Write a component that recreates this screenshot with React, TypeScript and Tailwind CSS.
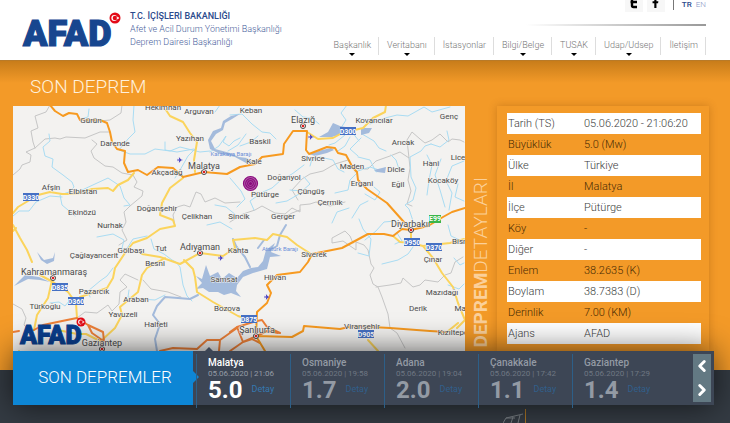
import { FaFacebookF } from "react-icons/fa";
import { LuChevronLeft, LuChevronRight } from "react-icons/lu";

const menu = [
  { name: "Başkanlık", sub: true },
  { name: "Veritabanı", sub: true },
  { name: "İstasyonlar", sub: false },
  { name: "Bilgi/Belge", sub: true },
  { name: "TUSAK", sub: true },
  { name: "Udap/Udsep", sub: true },
  { name: "İletişim", sub: false },
];

const details = [
  ["Tarih (TS)", "05.06.2020 - 21:06:20"],
  ["Büyüklük", "5.0 (Mw)"],
  ["Ülke", "Türkiye"],
  ["İl", "Malatya"],
  ["İlçe", "Pütürge"],
  ["Köy", "-"],
  ["Diğer", "-"],
  ["Enlem", "38.2635 (K)"],
  ["Boylam", "38.7383 (D)"],
  ["Derinlik", "7.00 (KM)"],
  ["Ajans", "AFAD"],
];

const quakes = [
  { place: "Malatya", date: "05.06.2020 | 21:06", size: "5.0" },
  { place: "Osmaniye", date: "05.06.2020 | 19:58", size: "1.7" },
  { place: "Adana", date: "05.06.2020 | 19:04", size: "2.0" },
  { place: "Çanakkale", date: "05.06.2020 | 17:42", size: "1.1" },
  { place: "Gaziantep", date: "05.06.2020 | 17:29", size: "1.4" },
];

const borders = [
  "M50 105 46 112 35 116 38 128 31 131 33 142 35 148M13 175 20 169 22 165 30 162 31 155 26 152 35 148 45 139 55 138 60 139 66 137 85 138 100 132 110 132M92 140 97 144 91 151 94 158 105 166 113 167 122 173 133 175 137 182 134 187 143 191 142 196 130 206 124 212 126 222 122 230 127 240 119 245",
  "M122 105 121 113 110 120 90 122 80 120M175 226 173 215 177 207 184 205 190 207 196 192 201 194 205 202 215 198 225 203 240 202",
  "M230 222 243 214 255 210 262 206 275 213 285 214 292 208 300 212 300 205 310 204 316 202 330 206 345 202M280 220 292 213 300 210M298 200 292 190 302 179 310 174 323 171 335 164 348 160 352 166M358 169 368 169 376 161 390 156 400 152 409 158 407 140 412 132 420 139 425 143 432 140 440 134 448 142 452 139 460 140 464 142",
  "M409 158 410 168 408 180 411 191 407 204 412 206M353 243 350 236 345 231 332 238 332 243 343 241 356 250 356 242 364 245 368 250 371 264 374 268 370 275 373 284 378 287 382 297 388 314 390 328 397 333 405 348M376 287 390 285 401 283 403 278 413 287 420 285 425 280 438 282 445 275 451 273 455 262 463 257",
  "M77 318 85 312 97 313 108 305 112 311 119 304 120 292 127 287 120 280 125 274 138 280M143 280 151 289 168 292 181 297M13 304 22 309 26 318 24 325 30 331",
];

const rivers = [
  "M49 134 50 141 43 147 45 156 53 159 52 167 63 175 72 182 74 187 69 192 60 195 62 205 68 210 75 216M134 105 133 120 135 132 128 139 119 150 130 154 145 154 155 149 170 151 180 147 200 152 210 151M13 216 19 211 29 211 36 202 50 196 62 197M80 191 95 184 108 178 120 186 124 198 130 205 124 206M81 119 88 117 89 109",
  "M195 149 188 156 180 170 175 178M165 142 165 150 177 152 194 149M210 152 219 146 226 136 223 142 229 146 234 141 240 138M228 151 238 145 246 134M215 205 226 207 236 215M207 225 220 222 232 229M220 105 215 112",
  "M230 115 242 114 252 124 262 132 270 133 276 139M230 178 241 191 245 199 237 207M254 210 250 201 263 192 272 188 281 180 292 174 304 165M240 146 251 142 258 136M276 203 287 201 299 194M290 190 302 191 310 184 304 177",
  "M295 110 303 117 312 118 319 124M347 105 341 113 346 120 341 128 352 132 359 141M370 124 385 118 397 115 408 116 424 107 432 112 450 107M362 134 374 141 379 148 386 151M345 135 335 143 329 145M350 137 345 146 338 151M361 138 350 149 358 156M310 166 312 159 320 157 333 160 338 169 344 172M355 172 370 167 382 171",
  "M399 169 396 160 391 155M358 157 370 160 376 172 385 168M357 173 350 180 348 190 335 193M365 194 375 200 380 192 374 187M411 234 413 221 409 209 405 205 413 200 416 188 411 177 410 157 421 151 425 146 431 144M431 144 440 147 449 140 447 131M464 161 452 166 446 181 452 193 449 210M441 159 435 175 440 190 445 207M427 155 432 165 429 180 427 195M332 223 337 212 349 208M352 218 360 205 368 201M464 201 455 197 458 184",
  "M358 253 369 256 371 239 363 229 359 219M365 240 376 231 384 222 395 221M382 264 398 260 408 254 413 247M395 244 402 241 397 233M448 285 459 289 464 284M454 258 460 265 464 263M448 225 451 236 464 242",
  "M97 237 113 234 124 240 122 248 126 250 133 239 147 236M151 239 154 249 164 254 172 260 176 262 180 267 183 285 187 296 192 301M113 268 107 276 100 281 88 291 90 297M50 303 59 302 65 306 70 300M129 290 128 297 140 299 155 300 165 295",
];

// wider, greyer streams that feed the dams
const streams = [
  "M157 351 155 339 160 324 153 315 157 306 165 297 178 298 190 299 198 295",
  "M233 239 236 246 245 257 250 267M286 225 280 235 277 246 270 250M264 240 258 248",
];

const yellowRoads = [
  "M166 110 170 116 183 122 190 133 197 142 194 160 195 172M183 178 170 188 162 203 160 215 173 220 175 226 160 229 147 238 133 243 125 253 115 268 113 278 107 288 80 297",
  "M134 173 128 180 118 185 113 191 108 188 92 189 80 193 70 194 62 194 50 192 38 195 28 201 18 207 13 213M13 225 20 238 27 250 32 262M40 275 53 282 68 292 76 303 77 318M52 280 48 298 37 315 34 330M13 360 19 351",
  "M142 254 160 257 180 264 200 253 223 256 235 248 233 240 255 238 267 240 273 234 287 237 297 245 311 254M165 258 147 268 142 275 138 292 120 307 122 315 115 328 102 340",
  "M184 260 193 269 195 277 197 292 213 302 238 316 247 319",
  "M307 132 318 139 333 138 342 133 363 128 373 118 385 112 386 105M393 236 400 242 411 243 423 246 433 258 442 273 453 287 458 303 465 320 457 328M411 231 411 243M423 246 450 243 464 239M368 340 378 351M447 332 458 323M13 231 16 228M58 330 77 334 86 334 102 342",
];

const orangeRoads = [
  "M50 105 55 111 63 116 69 113 77 114 80 120 100 120 107 123 110 132 112 142 117 149 125 151 124 163 128 172 138 170 147 175 158 167 173 168 183 177 204 172 227 174 240 167 255 164 262 157 283 154 284 144 293 131 307 131 306 150 309 154 327 147 335 148 338 153 346 155 353 168 357 172 358 180 367 189 387 203 403 221 411 230 428 226 443 217 452 212 465 208",
  "M411 230 402 229 393 236 384 234 368 234 342 248 312 254 308 262 300 272 277 275 267 285 271 293 267 303 257 312 256 336 265 351M257 336 292 337 303 331 304 326 340 329 353 326 390 328 430 331 447 332",
];

const redRoads = [
  "M34 330 43 325 67 320 77 318 88 325 92 333 102 340 102 351M88 325 103 332 104 341M13 332 19 331M257 321 262 320 267 327 280 333M257 336 267 331 278 333M230 332 237 327 257 321M237 327 243 342 252 339 260 343M160 351 173 348 197 349 207 340 220 340 237 328M219 351 220 340M230 351 243 342 257 336",
];

const lakes = [
  "M208 140 213 131 221 128 223 121 231 116 240 114 232 119 225 123 223 130 216 134 211 141 215 149 230 153 239 157 247 158 254 163 246 163 235 157 218 153 210 149Z",
  "M319 137 328 132 333 123 340 126 351 128 354 131 342 134 332 137Z",
  "M309 154 322 150 331 148 334 150 327 153 315 156Z",
  "M361 128 372 128 369 133 361 135Z",
  "M374 170 386 167 385 173 377 172Z",
  "M196 276 202 279 206 265 210 276 218 272 222 279 229 273 237 278 243 271 251 268 258 267 263 261 266 250 275 243 271 252 281 256 270 257 267 269 253 273 243 277 237 285 236 291 241 297 231 293 224 295 218 292 209 292 203 288 196 289 202 283Z",
  "M37 252 44 260 53 258 55 252 54 261 47 264 41 260Z",
  "M14 286 20 280 25 275 39 277 50 282 40 280 28 279 20 283Z",
];

// [label, x of the centre, baseline, size]
const places: [string, number, number, number][] = [
  ["Hekimhan", 163, 110, 8], ["Arguvan", 199, 114, 8], ["Gürün", 91, 123, 8],
  ["Yazıhan", 190, 141, 8], ["Darende", 115, 146, 8], ["Malatya", 204, 169, 9],
  ["Akçadağ", 167, 175, 8], ["Afşin", 51, 190, 8], ["Elbistan", 83, 194, 8],
  ["Ekinözü", 82, 215, 8], ["Doğanşehir", 157, 211, 8], ["Çelikhan", 197, 219, 8],
  ["Nurhak", 110, 228, 8], ["Sincik", 239, 219, 8], ["Keban", 251, 113, 8],
  ["Elazığ", 303, 123, 9], ["Kovancılar", 374, 123, 8], ["Genç", 449, 119, 8],
  ["Baskil", 260, 144, 8], ["Arıcak", 403, 145, 8], ["Kale", 254, 164, 8],
  ["Sivrice", 313, 161, 8], ["Maden", 352, 169, 8], ["Dicle", 396, 172, 8],
  ["Hani", 431, 166, 8], ["Lice", 458, 160, 8], ["Kocaköy", 443, 183, 8],
  ["Doğanyol", 284, 180, 8], ["Pütürge", 265, 197, 8], ["Ergani", 362, 186, 8],
  ["Eğil", 398, 187, 8], ["Çüngüş", 311, 194, 8], ["Çermik", 330, 205, 8],
  ["Gerger", 283, 219, 8], ["Diyarbakır", 411, 227, 9], ["Çağlayancerit", 94, 258, 8],
  ["Gölbaşı", 131, 253, 8], ["Tut", 161, 251, 8], ["Adıyaman", 200, 250, 9],
  ["Besni", 155, 266, 8], ["Kahta", 238, 253, 8], ["Kahramanmaraş", 54, 275, 9],
  ["Samsat", 224, 282, 8], ["Pazarcık", 94, 294, 8], ["Türkoğlu", 45, 309, 8],
  ["Araban", 136, 302, 8], ["Yavuzeli", 123, 317, 8], ["Halfeti", 156, 327, 8],
  ["Bozova", 227, 311, 8], ["Gaziantep", 102, 346, 9], ["Siverek", 314, 257, 8],
  ["Hilvan", 275, 280, 8], ["Çınar", 433, 262, 8], ["Bismil", 463, 244, 8],
  ["Mazıdağı", 442, 295, 8], ["Derik", 418, 311, 8], ["Mardin", 467, 311, 8],
  ["Şanlıurfa", 257, 333, 9], ["Viranşehir", 362, 329, 8], ["Kızıltepe", 453, 335, 8],
];

const shields: [string, number, number][] = [
  ["D330", 31, 197], ["D300", 348, 131], ["D950", 412, 242], ["D370", 434, 247],
  ["D835", 60, 287], ["D360", 76, 301], ["D875", 249, 319], ["D905", 366, 334],
];

const cities = [[204, 172], [303, 126], [411, 230], [200, 253], [53, 278], [102, 349], [256, 336]];
const airports = [[180, 160], [311, 137], [221, 258], [267, 297]];

function Flag({ x, y, r }: { x: number; y: number; r: number }) {
  return (
    <g transform={`translate(${x} ${y}) scale(${r / 6})`}>
      <circle r="6" fill="#e30a17" />
      <circle cx="-0.8" r="3.2" fill="#fff" />
      <circle cx="0" r="2.5" fill="#e30a17" />
      <path d="M1 0 2.4-.5 2.4-1.9 3.3-.8 4.6-1.2 3.8 0 4.6 1.2 3.3.8 2.4 1.9 2.4.5Z" fill="#fff" />
    </g>
  );
}

function Lines({ paths, color, width }: { paths: string[]; color: string; width: number }) {
  return (
    <g fill="none" stroke={color} strokeWidth={width} strokeLinejoin="round" strokeLinecap="round">
      {paths.map((d) => (
        <path key={d} d={d} />
      ))}
    </g>
  );
}

function QuakeMap() {
  return (
    <svg viewBox="13 106 452 245" className="block w-full bg-[#f3f2f0] font-['Roboto',sans-serif] font-normal">
      <Lines paths={borders} color="#c6c6c6" width={1} />
      <Lines paths={rivers} color="#a9dcf3" width={1} />
      <Lines paths={streams} color="#a4bbdc" width={2} />
      {lakes.map((d) => (
        <path key={d} d={d} fill="#a4bbdc" />
      ))}
      <Lines paths={yellowRoads} color="#fbd45c" width={2} />
      <Lines paths={redRoads} color="#ee8038" width={2} />
      <Lines paths={orangeRoads} color="#f79a20" width={2} />
      {cities.map(([x, y]) => (
        <g key={x}>
          <circle cx={x} cy={y} r="2.5" fill="#fff" stroke="#444" />
          <circle cx={x} cy={y} r="1.3" fill="#e02020" />
        </g>
      ))}
      {airports.map(([x, y]) => (
        <path
          key={x}
          transform={`translate(${x} ${y})`}
          d="M3 0 1 .6-.6 2.6-1.2 2.6-.6.6-2 .5-2.7 1.5-2.4 0-2.7-1.5-2-.5-.6-.6-1.2-2.6-.6-2.6 1-.6Z"
          fill="#3d35c0"
        />
      ))}
      <g textAnchor="middle" fill="#4a4a4a" stroke="#f3f2f0" strokeWidth="1" paintOrder="stroke">
        {places.map(([name, x, y, size]) => (
          <text key={name} x={x} y={y} fontSize={size}>
            {name}
          </text>
        ))}
      </g>
      <g textAnchor="middle" fill="#6c8fd8" fontSize="6">
        <text x="231" y="156">Karakaya Barajı</text>
        <text x="280" y="251">Atatürk Barajı</text>
      </g>
      <g textAnchor="middle" fill="#fff" fontSize="7" fontWeight="bold">
        {shields.map(([name, x, y]) => (
          <g key={name}>
            <rect x={x - 8} y={y - 4} width="16" height="8" fill="#4570c4" />
            <text x={x} y={y + 3}>{name}</text>
          </g>
        ))}
        <rect x="429" y="215" width="12" height="8" fill="#3bb54a" />
        <text x="435" y="221">E99</text>
      </g>
      <g fill="none" stroke="#8a0a7c" strokeWidth="1.2">
        <circle cx="250.500" cy="183.500" r="7" fill="#b25aaa" />
        <circle cx="250.500" cy="183.500" r="4.800" />
        <circle cx="250.500" cy="183.500" r="2.800" />
        <circle cx="250.500" cy="183.500" r="1" fill="#8a0a7c" />
      </g>
      <text
        x="20"
        y="344"
        fontSize="25"
        strokeWidth="1"
        className="fill-[#0a3f8f] stroke-[#0a3f8f] font-black"
      >
        AFAD
      </text>
      <Flag x={81} y={322} r={4.5} />
    </svg>
  );
}

function Header() {
  return (
    <header className="flex h-[60px] justify-between bg-white pl-[22px] pr-6">
      <div className="flex gap-2 pt-[10px]">
        <svg viewBox="0 0 100 50" className="h-[50px] w-[100px]" role="img" aria-label="AFAD">
          <text
            x="1"
            y="36"
            fontSize="36"
            strokeWidth="1.2"
            className="fill-[#17468f] stroke-[#17468f] font-['Roboto',sans-serif] font-black"
          >
            AFAD
          </text>
          <Flag x={93} y={8} r={5.5} />
        </svg>
        <div className="whitespace-nowrap text-[9px] leading-[13px] text-[#4a5f9c]">
          <p className="font-medium text-[#2b4a8c]">T.C. İÇİŞLERİ BAKANLIĞI</p>
          <p>Afet ve Acil Durum Yönetimi Başkanlığı</p>
          <p>Deprem Dairesi Başkanlığı</p>
        </div>
      </div>
      <div className="flex flex-col items-end justify-between">
        <div className="flex h-3 items-start text-[8px] leading-[10px]">
          <a href="#twitter" aria-label="Twitter" className="mr-1 flex h-3 w-[18px] justify-center bg-[#f7f7f7]">
            <svg viewBox="0 0 10 12" className="h-3 w-[10px]">
              <path d="M3 0V5.500Q3 7 4.500 7H8M1.500 2H8" fill="none" stroke="#000" strokeWidth="2.400" />
            </svg>
          </a>
          <a href="#facebook" aria-label="Facebook" className="flex h-3 w-[18px] justify-center overflow-hidden bg-[#f7f7f7]">
            <FaFacebookF className="-mt-[3px] h-[11px] w-[11px] shrink-0" />
          </a>
          <span className="ml-2 mr-2 h-[10px] w-px bg-[#777]" />
          <a href="#tr" className="mr-1 font-medium text-[#2b4a8c]">TR</a>
          <a href="#en" className="text-[#8d99c6]">EN</a>
        </div>
        <div className="h-[2px] w-[180px] bg-linear-to-r from-transparent to-[#999]" />
        <nav className="flex h-[23px] text-[9px] leading-4 text-[#777]">
          {menu.map((item) => (
            <a
              key={item.name}
              href="#menu"
              className="flex flex-col items-center whitespace-nowrap bg-[linear-gradient(#ddd,#ddd)] bg-[length:1px_18px] bg-right-top bg-no-repeat px-2"
            >
              {item.name}
              {item.sub && <span className="border-x-[3px] border-t-[3px] border-x-transparent border-t-black" />}
            </a>
          ))}
        </nav>
      </div>
    </header>
  );
}

function Details() {
  return (
    <div className="w-[212px] shrink-0 pl-[10px] pr-2 pt-[7px] shadow-[0_0_8px_rgba(120,60,0,0.3)]">
      <table className="w-full text-left text-[11px] leading-[21px] text-[#3d3d3d]">
        <tbody>
          {details.map(([label, value]) => (
            <tr key={label} className="odd:bg-white even:text-[#4a2c04]">
              <th scope="row" className="w-[76px] p-0 pl-px font-light">{label}</th>
              <td className="p-0 pl-px">{value}</td>
            </tr>
          ))}
        </tbody>
      </table>
    </div>
  );
}

function QuakeBar() {
  return (
    <section className="relative ml-[13px] mr-4 -mt-[19px] flex h-[54px] bg-[#3d4655] shadow-[0_0_32px_rgba(0,0,0,0.65)]">
      <h2 className="relative flex w-[180px] shrink-0 items-center justify-center bg-[#0d86d5] pl-1 text-[17px] font-light text-white">
        SON DEPREMLER
        <span className="absolute left-full top-5 border-y-[6px] border-l-[6px] border-y-transparent border-l-[#0d86d5]" />
      </h2>
      <ul className="ml-[3px] flex min-w-0 flex-1">
        {quakes.map((quake, i) => (
          <li
            key={quake.place}
            className={`relative mt-[3px] h-[54px] w-[94px] border-l border-[#2d5f88] pl-[11px] pt-[3px] whitespace-nowrap ${
              i === 0 ? "text-white" : "text-[#939aa4]"
            }`}
          >
            {i === 0 && (
              <span className="absolute -top-[7px] left-2 border-x-4 border-b-4 border-x-transparent border-b-[#3d4655]" />
            )}
            <h3 className="text-[10px] leading-3 font-medium">{quake.place}</h3>
            <p className={`text-[8px] leading-[9px] font-normal ${i === 0 ? "text-[#959ca6]" : "text-[#6f7783]"}`}>
              {quake.date}
            </p>
            <div className="flex items-center gap-[9px]">
              <strong className="text-[24px] leading-6 font-bold">{quake.size}</strong>
              <a href="#detay" className={`text-[9px] font-normal ${i === 0 ? "text-[#3578b0]" : "text-[#315f8b]"}`}>
                Detay
              </a>
            </div>
          </li>
        ))}
      </ul>
      <div className="mr-[3px] mt-[3px] flex h-12 w-[18px] shrink-0 flex-col bg-[#637983] text-white">
        <button type="button" aria-label="Önceki" className="flex flex-1 items-center justify-center">
          <LuChevronLeft className="h-[18px] w-[18px]" strokeWidth={4} />
        </button>
        <button type="button" aria-label="Sonraki" className="flex flex-1 items-center justify-center">
          <LuChevronRight className="h-[18px] w-[18px]" strokeWidth={4} />
        </button>
      </div>
    </section>
  );
}

export default function App() {
  return (
    <div className="flex min-h-screen flex-col overflow-hidden bg-[#343b43] font-['Roboto',sans-serif] font-light">
      <Header />
      <main className="border-t border-[#b87a28] bg-[#f39a28] bg-[linear-gradient(rgba(120,70,0,0.35),transparent_22px)] pb-[19px]">
        <h1 className="h-[45px] pl-[30px] pt-3 text-[19px] leading-7 text-[#fff0dc]">SON DEPREM</h1>
        <div className="flex pl-[13px] pr-[21px]">
          <div className="min-w-0 flex-1">
            <QuakeMap />
          </div>
          <div className="flex w-8 shrink-0 items-center justify-center">
            <h2 className="mt-auto mb-1 rotate-180 text-[19px] leading-5 text-[#fbd09a] [writing-mode:vertical-rl]">
              <b className="font-bold">DEPREM</b>DETAYLARI
            </h2>
          </div>
          <Details />
        </div>
      </main>
      <QuakeBar />
      <div className="flex justify-end pr-[203px]">
        <svg viewBox="0 0 24 14" className="mt-1 h-[14px] w-6">
          <path d="M0 14 3 9 20 5M8 14 10 8M15 14 17 6M3 9H12" fill="none" stroke="#777d82" />
          <path d="M22.500 0V14" stroke="#a87324" />
        </svg>
      </div>
    </div>
  );
}
